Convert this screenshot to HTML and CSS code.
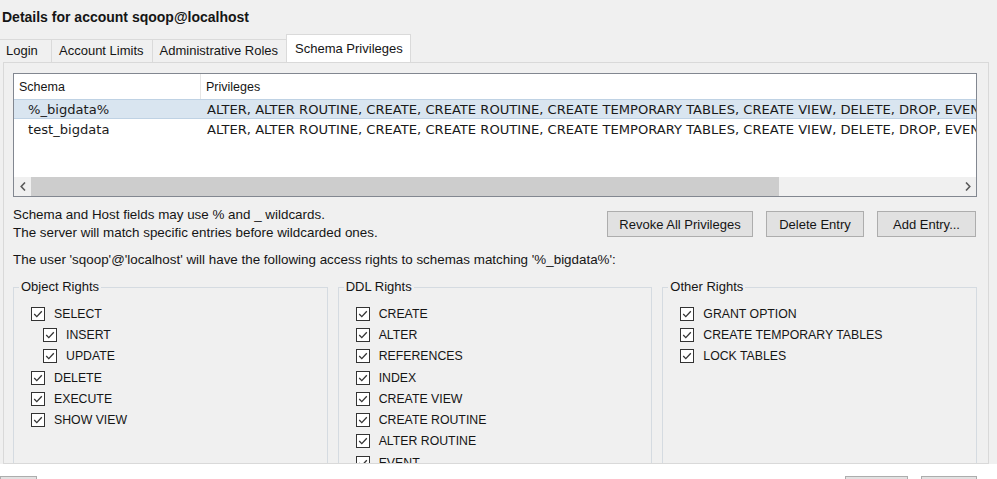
FILE: index.html
```html
<!DOCTYPE html>
<html lang="en">
<head>
<meta charset="utf-8">
<title>Details for account sqoop@localhost</title>
<link rel="stylesheet" href="styles.css">
</head>
<body>
<div class="window">
  <div class="title">Details for account sqoop@localhost</div>
  <div class="tabs">
    <div class="tab first">Login</div>
    <div class="tab">Account Limits</div>
    <div class="tab">Administrative Roles</div>
    <div class="tab active">Schema Privileges</div>
  </div>
  <div class="panel">
    <div class="list">
      <div class="list-head">
        <div class="head-schema">Schema</div>
        <div class="head-priv">Privileges</div>
      </div>
      <div class="row selected">
        <div class="cell-schema">%_bigdata%</div>
        <div class="cell-priv">ALTER, ALTER ROUTINE, CREATE, CREATE ROUTINE, CREATE TEMPORARY TABLES, CREATE VIEW, DELETE, DROP, EVENT, EXECUTE, GRANT OPTION, INDEX, INSERT, LOCK TABLES, REFERENCES, SELECT, SHOW VIEW, TRIGGER, UPDATE</div>
      </div>
      <div class="row">
        <div class="cell-schema">test_bigdata</div>
        <div class="cell-priv">ALTER, ALTER ROUTINE, CREATE, CREATE ROUTINE, CREATE TEMPORARY TABLES, CREATE VIEW, DELETE, DROP, EVENT, EXECUTE, GRANT OPTION, INDEX, INSERT, LOCK TABLES, REFERENCES, SELECT, SHOW VIEW, TRIGGER, UPDATE</div>
      </div>
      <div class="list-fill"></div>
      <div class="hscroll">
        <div class="sb-btn"><svg width="6" height="9" viewBox="0 0 6 9"><polyline points="5,0.5 1.2,4.5 5,8.5" fill="none" stroke="#5a5a5a" stroke-width="1.6"/></svg></div>
        <div class="sb-track"><div class="sb-thumb"></div></div>
        <div class="sb-btn"><svg width="6" height="9" viewBox="0 0 6 9"><polyline points="1,0.5 4.8,4.5 1,8.5" fill="none" stroke="#5a5a5a" stroke-width="1.6"/></svg></div>
      </div>
    </div>

    <div class="info">
      <div class="note">
        <div>Schema and Host fields may use % and _ wildcards.</div>
        <div>The server will match specific entries before wildcarded ones.</div>
      </div>
      <div class="actions">
        <button class="btn w-revoke">Revoke All Privileges</button>
        <button class="btn w-delete">Delete Entry</button>
        <button class="btn w-add">Add Entry...</button>
      </div>
    </div>

    <div class="access">The user 'sqoop'@'localhost' will have the following access rights to schemas matching '%_bigdata%':</div>

    <div class="groups">
      <fieldset class="group">
        <legend>Object Rights</legend>
        <div class="checks">
          <div class="check"><span class="box"><svg viewBox="0 0 12 12"><polyline points="2.2,6 4.8,8.6 9.8,3.2"/></svg></span>SELECT</div>
          <div class="check sub"><span class="box"><svg viewBox="0 0 12 12"><polyline points="2.2,6 4.8,8.6 9.8,3.2"/></svg></span>INSERT</div>
          <div class="check sub"><span class="box"><svg viewBox="0 0 12 12"><polyline points="2.2,6 4.8,8.6 9.8,3.2"/></svg></span>UPDATE</div>
          <div class="check"><span class="box"><svg viewBox="0 0 12 12"><polyline points="2.2,6 4.8,8.6 9.8,3.2"/></svg></span>DELETE</div>
          <div class="check"><span class="box"><svg viewBox="0 0 12 12"><polyline points="2.2,6 4.8,8.6 9.8,3.2"/></svg></span>EXECUTE</div>
          <div class="check"><span class="box"><svg viewBox="0 0 12 12"><polyline points="2.2,6 4.8,8.6 9.8,3.2"/></svg></span>SHOW VIEW</div>
        </div>
      </fieldset>
      <fieldset class="group">
        <legend>DDL Rights</legend>
        <div class="checks">
          <div class="check"><span class="box"><svg viewBox="0 0 12 12"><polyline points="2.2,6 4.8,8.6 9.8,3.2"/></svg></span>CREATE</div>
          <div class="check"><span class="box"><svg viewBox="0 0 12 12"><polyline points="2.2,6 4.8,8.6 9.8,3.2"/></svg></span>ALTER</div>
          <div class="check"><span class="box"><svg viewBox="0 0 12 12"><polyline points="2.2,6 4.8,8.6 9.8,3.2"/></svg></span>REFERENCES</div>
          <div class="check"><span class="box"><svg viewBox="0 0 12 12"><polyline points="2.2,6 4.8,8.6 9.8,3.2"/></svg></span>INDEX</div>
          <div class="check"><span class="box"><svg viewBox="0 0 12 12"><polyline points="2.2,6 4.8,8.6 9.8,3.2"/></svg></span>CREATE VIEW</div>
          <div class="check"><span class="box"><svg viewBox="0 0 12 12"><polyline points="2.2,6 4.8,8.6 9.8,3.2"/></svg></span>CREATE ROUTINE</div>
          <div class="check"><span class="box"><svg viewBox="0 0 12 12"><polyline points="2.2,6 4.8,8.6 9.8,3.2"/></svg></span>ALTER ROUTINE</div>
          <div class="check"><span class="box"><svg viewBox="0 0 12 12"><polyline points="2.2,6 4.8,8.6 9.8,3.2"/></svg></span>EVENT</div>
        </div>
      </fieldset>
      <fieldset class="group">
        <legend>Other Rights</legend>
        <div class="checks">
          <div class="check"><span class="box"><svg viewBox="0 0 12 12"><polyline points="2.2,6 4.8,8.6 9.8,3.2"/></svg></span>GRANT OPTION</div>
          <div class="check"><span class="box"><svg viewBox="0 0 12 12"><polyline points="2.2,6 4.8,8.6 9.8,3.2"/></svg></span>CREATE TEMPORARY TABLES</div>
          <div class="check"><span class="box"><svg viewBox="0 0 12 12"><polyline points="2.2,6 4.8,8.6 9.8,3.2"/></svg></span>LOCK TABLES</div>
        </div>
      </fieldset>
    </div>
  </div>
  <div class="footer">
    <div class="fbtn w-left"></div>
    <div class="fright">
      <div class="fbtn w-f1"></div>
      <div class="fbtn w-f2"></div>
    </div>
  </div>
</div>
</body>
</html>
```

FILE: styles.css
```css
* { box-sizing: border-box; }
html, body { margin: 0; padding: 0; }
body {
  width: 997px;
  height: 479px;
  overflow: hidden;
  background: #f0f0f0;
  font-family: "Liberation Sans", Arial, sans-serif;
  font-size: 13.4px;
  color: #151515;
}
.window {
  display: flex;
  flex-direction: column;
  height: 479px;
}
.title {
  height: 34px;
  line-height: 34px;
  padding-left: 2px;
  font-weight: bold;
  font-size: 14px;
  flex-shrink: 0;
}
.tabs {
  display: flex;
  align-items: flex-end;
  height: 28px;
  flex-shrink: 0;
  font-size: 13px;
}
.tab {
  height: 23px;
  line-height: 22px;
  padding: 0 8px 0 7px;
  border-top: 1px solid #dadada;
  border-right: 1px solid #dadada;
  background: #f0f0f0;
  white-space: nowrap;
}
.tab.first {
  width: 52px;
  padding-left: 6px;
}
.tab.active {
  height: 28px;
  line-height: 27px;
  margin-left: -1px;
  padding: 0 7px 0 8px;
  background: #ffffff;
  border-left: 1px solid #dadada;
}
.panel {
  margin-left: 3px;
  width: 986px;
  flex: 1;
  min-height: 0;
  overflow: hidden;
  border: 1px solid #d9d9d9;
  padding: 10px 11px 0 9px;
  display: flex;
  flex-direction: column;
}
.list {
  height: 124px;
  flex-shrink: 0;
  border: 1px solid #828790;
  background: #ffffff;
  display: flex;
  flex-direction: column;
}
.list-head {
  display: flex;
  height: 25px;
  font-size: 12.5px;
  flex-shrink: 0;
}
.head-schema {
  width: 187px;
  padding-left: 5px;
  border-right: 1px solid #e5e5e5;
  display: flex;
  align-items: center;
}
.head-priv {
  padding-left: 5px;
  display: flex;
  align-items: center;
}
.row {
  display: flex;
  align-items: center;
  height: 20px;
  flex-shrink: 0;
  font-family: "DejaVu Sans", Verdana, sans-serif;
  font-size: 13.1px;
  white-space: nowrap;
  overflow: hidden;
  color: #1a1a1a;
}
.row.selected {
  background: #d9e5f0;
  border-top: 1px solid #bfd2e4;
  border-bottom: 1px solid #bfd2e4;
}
.cell-schema {
  width: 187px;
  padding-left: 14px;
  flex-shrink: 0;
}
.cell-priv {
  padding-left: 6px;
  flex: 1;
  min-width: 0;
  overflow: hidden;
}
.list-fill { flex: 1; }
.hscroll {
  height: 19px;
  flex-shrink: 0;
  display: flex;
  background: #f0f0f0;
}
.sb-btn {
  width: 17px;
  display: flex;
  align-items: center;
  justify-content: center;
}
.sb-track {
  flex: 1;
  display: flex;
}
.sb-thumb {
  width: 748px;
  background: #cdcdcd;
}
.info {
  display: flex;
  justify-content: space-between;
  margin-top: 9px;
  flex-shrink: 0;
}
.note { line-height: 18px; }
.actions {
  display: flex;
  gap: 13px;
  margin-top: 5px;
  margin-right: 1px;
  font-size: 13px;
}
.btn {
  height: 26px;
  border: 1px solid #adadad;
  background: #e1e1e1;
  font: inherit;
  color: inherit;
  padding: 0;
  display: flex;
  align-items: center;
  justify-content: center;
}
.w-revoke { width: 146px; }
.w-delete { width: 98px; }
.w-add { width: 99px; }
.access {
  margin-top: 9px;
  line-height: 18px;
  flex-shrink: 0;
}
.groups {
  display: grid;
  grid-template-columns: repeat(3, 1fr);
  gap: 10px;
  margin-top: 11px;
  flex-shrink: 0;
}
.group {
  margin: 0;
  padding: 0;
  min-width: 0;
  height: 220px;
  border: 1px solid #d5dbe1;
}
.group legend {
  margin-left: 5px;
  padding: 0 2px;
  line-height: 14px;
  font-size: 13px;
}
.checks {
  padding: 9px 0 0 17px;
}
.check {
  display: flex;
  align-items: center;
  height: 21.3px;
  font-size: 12.3px;
  white-space: nowrap;
}
.check.sub { padding-left: 12px; }
.box {
  width: 14px;
  height: 14px;
  border: 1px solid #333333;
  background: #ffffff;
  margin-right: 9px;
  flex-shrink: 0;
  display: flex;
}
.box svg {
  width: 12px;
  height: 12px;
}
.box polyline {
  fill: none;
  stroke: #333333;
  stroke-width: 1.3;
}
.footer {
  height: 15px;
  flex-shrink: 0;
  background: #ffffff;
  display: flex;
  justify-content: space-between;
  padding-top: 12px;
  overflow: hidden;
}
.fright {
  display: flex;
  gap: 13px;
  margin-right: 20px;
}
.fbtn {
  height: 20px;
  border: 1px solid #adadad;
  background: #e1e1e1;
}
.w-left { width: 37px; }
.w-f1 { width: 63px; }
.w-f2 { width: 56px; }
```
